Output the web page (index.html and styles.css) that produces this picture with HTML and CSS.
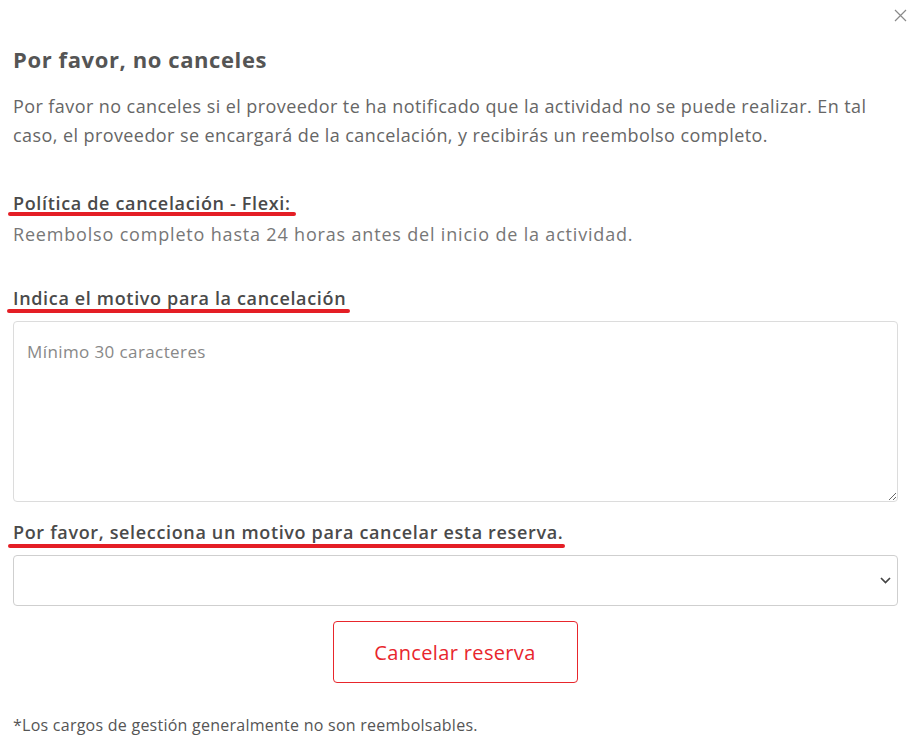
FILE: index.html
```html
<!DOCTYPE html>
<html lang="es">
<head>
<meta charset="utf-8">
<title>Por favor, no canceles</title>
<link rel="stylesheet" href="styles.css">
</head>
<body>
<div class="modal">
  <button class="close" aria-label="Cerrar">
    <svg width="13" height="13" viewBox="0 0 13 13"><path d="M1 1L12 12M12 1L1 12" stroke="#8a8a8a" stroke-width="1.2" fill="none"/></svg>
  </button>
  <h1 class="title">Por favor, no canceles</h1>
  <p class="intro">Por favor no canceles si el proveedor te ha notificado que la actividad no se puede realizar. En tal caso, el proveedor se encargará de la cancelación, y recibirás un reembolso completo.</p>
  <h2 class="label label-policy"><span class="mark mark-a">Política de cancelación - Flexi:</span></h2>
  <p class="policy">Reembolso completo hasta 24 horas antes del inicio de la actividad.</p>
  <h2 class="label label-reason"><span class="mark mark-b">Indica el motivo para la cancelación</span></h2>
  <textarea class="reason" placeholder="Mínimo 30 caracteres"></textarea>
  <h2 class="label label-select"><span class="mark mark-c">Por favor, selecciona un motivo para cancelar esta reserva.</span></h2>
  <select class="choice"><option></option></select>
  <div class="actions"><button class="cancel">Cancelar reserva</button></div>
  <p class="note">*Los cargos de gestión generalmente no son reembolsables.</p>
</div>
</body>
</html>
```

FILE: styles.css
```css
html, body {
  margin: 0;
  padding: 0;
  background: #fff;
}
body {
  font-family: "Open Sans", "Noto Sans", sans-serif;
  color: #666;
}
.modal {
  position: relative;
  padding: 44px 15px 0 13px;
  width: 912px;
  box-sizing: border-box;
}
.close {
  position: absolute;
  top: 9px;
  right: 5px;
  border: 0;
  background: none;
  padding: 0;
  width: 13px;
  height: 13px;
  cursor: pointer;
}
.close svg { display: block; }
.title {
  margin: 0;
  font-size: 22px;
  line-height: 30px;
  font-weight: 700;
  letter-spacing: 0.6px;
  color: #555;
}
.intro {
  margin: 18px 0 0;
  font-size: 18px;
  line-height: 29px;
  letter-spacing: 0.42px;
  color: #666;
}
.label {
  margin: 0;
  font-size: 18px;
  line-height: 24px;
  font-weight: 600;
  letter-spacing: 0.66px;
  color: #4a4a4a;
}
.label-policy { margin-top: 41px; }
.label-reason { margin-top: 40px; }
.label-select { margin-top: 18px; }
.mark {
  position: relative;
  display: inline-block;
}
.mark::after {
  content: "";
  position: absolute;
  left: -5px;
  right: -5px;
  height: 4px;
  border-radius: 2px;
  background: #e41e25;
}
.mark-a::after { bottom: -1px; }
.mark-b::after { bottom: -3px; left: -6px; right: -4px; }
.mark-c::after { bottom: -4px; right: -2px; }
.policy {
  margin: 7px 0 0;
  font-size: 18px;
  line-height: 24px;
  letter-spacing: 0.82px;
  color: #777;
}
.reason {
  display: block;
  box-sizing: border-box;
  width: 885px;
  height: 181px;
  margin-top: 11px;
  padding: 18px 13px;
  border: 1px solid #dcdcdc;
  border-radius: 4px;
  font-family: inherit;
  font-size: 17px;
  line-height: 24px;
  letter-spacing: 0.4px;
  color: #555;
  resize: vertical;
}
.reason::placeholder { color: #888; }
.choice {
  display: block;
  box-sizing: border-box;
  width: 885px;
  height: 51px;
  margin-top: 11px;
  border: 1px solid #cfcfcf;
  border-radius: 4px;
  background: #fff url("data:image/svg+xml;utf8,<svg xmlns='http://www.w3.org/2000/svg' width='11' height='7' viewBox='0 0 11 7'><path d='M1 1l4.5 4.5 4.5-4.5' stroke='%23444' stroke-width='1.7' fill='none'/></svg>") no-repeat right 6px center;
  appearance: none;
  -webkit-appearance: none;
  font-family: inherit;
  font-size: 17px;
}
.actions {
  display: flex;
  justify-content: center;
  margin-top: 15px;
}
.cancel {
  width: 245px;
  height: 62px;
  border: 1px solid #e8262c;
  border-radius: 4px;
  background: #fff;
  color: #e8262c;
  font-family: inherit;
  font-size: 20px;
  letter-spacing: 0.35px;
  cursor: pointer;
}
.note {
  margin: 31px 0 0;
  font-size: 16px;
  line-height: 22px;
  letter-spacing: 0.25px;
  color: #555;
}
```
